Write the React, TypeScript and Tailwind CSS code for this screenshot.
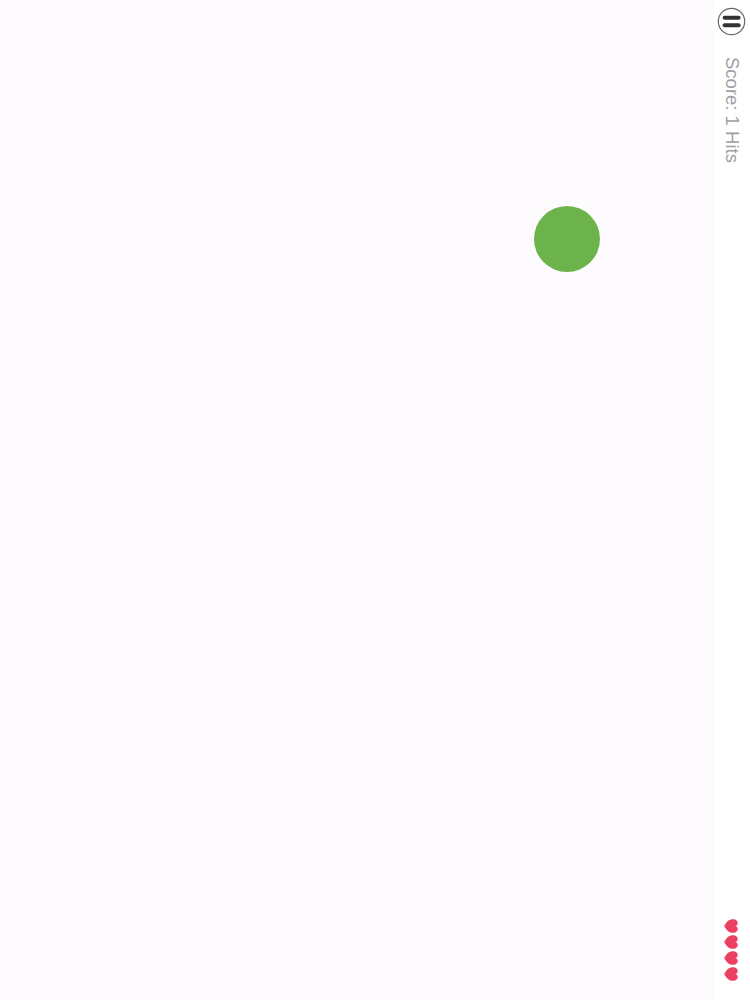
const HEARTS = [0, 1, 2, 3];

function PauseIcon() {
    return (
        <svg width="29" height="29" viewBox="0 0 29 29" fill="none">
            <circle cx="14.5" cy="14.5" r="13.2" stroke="#66666b" strokeWidth="1.2" />
            <rect x="5.6" y="8.8" width="18" height="4" rx="2" fill="#333337" />
            <rect x="5.6" y="16.2" width="18" height="4" rx="2" fill="#333337" />
        </svg>
    );
}

function Heart() {
    return (
        <svg width="14" height="14" viewBox="0 0 14 14">
            {/* heart lies on its side, point to the left */}
            <path
                d="M0.2 7 C1.4 5 2.6 3 4.2 1.7 C5.6 0.6 7.6 0.1 9.4 0.2 C12 0.3 13.8 2 13.8 4 C13.8 5.3 13 6.3 11.6 7 C13 7.7 13.8 8.7 13.8 10 C13.8 12 12 13.7 9.4 13.8 C7.6 13.9 5.6 13.4 4.2 12.3 C2.6 11 1.4 9 0.2 7 Z"
                fill="#ec4063"
            />
        </svg>
    );
}

export default function App() {
    return (
        <div className="flex h-[1000px] w-[750px] overflow-hidden bg-white font-['Liberation_Sans',sans-serif]">
            {/* Play field */}
            <main className="relative h-full flex-1 bg-[#fdfbfd]">
                <div className="absolute left-[533.5px] top-[205.5px] h-[66px] w-[66px] rounded-full bg-[#6cb34c]" />
            </main>

            {/* Side bar */}
            <aside className="flex h-full w-[36px] flex-col items-center bg-white pr-[1px] pt-[7px] pb-[19px]">
                <PauseIcon />
                <span className="mt-[21px] text-[18.5px] leading-[22px] text-[#a0a0a4] [writing-mode:vertical-rl]">
                    Score: 1 Hits
                </span>
                <div className="mt-auto flex flex-col gap-[2px] pr-[2px]">
                    {HEARTS.map((i) => (
                        <Heart key={i} />
                    ))}
                </div>
            </aside>
        </div>
    );
}
